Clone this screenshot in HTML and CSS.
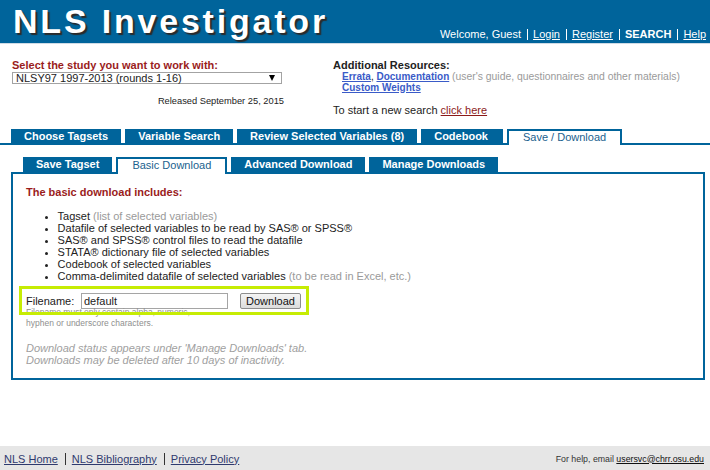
FILE: index.html
```html
<!DOCTYPE html>
<html lang="en">
<head>
  <meta charset="UTF-8" />
  <title>NLS Investigator</title>
  <link rel="stylesheet" href="styles.css">
</head>
<body>
  <header class="top">
    <div class="logo">NLS Investigator</div>
    <div class="user-nav">
      <span>Welcome, Guest</span><i class="sep"></i><a href="#">Login</a><i class="sep"></i><a href="#">Register</a><i class="sep"></i><b>SEARCH</b><i class="sep"></i><a href="#">Help</a>
    </div>
  </header>

  <section class="study">
    <div class="study-pick">
      <div class="pick-label">Select the study you want to work with:</div>
      <div class="select-box"><span>NLSY97 1997-2013 (rounds 1-16)</span><i class="arrow"></i></div>
      <div class="released">Released September 25, 2015</div>
    </div>
    <div class="resources">
      <div class="res-title">Additional Resources:</div>
      <div class="res-line"><a href="#">Errata</a>, <a href="#">Documentation</a> <span class="note">(user's guide, questionnaires and other materials)</span></div>
      <div class="res-line"><a href="#">Custom Weights</a></div>
      <div class="new-search">To start a new search <a href="#">click here</a></div>
    </div>
  </section>

  <nav class="tabs main-tabs">
    <a href="#" class="tab">Choose Tagsets</a>
    <a href="#" class="tab">Variable Search</a>
    <a href="#" class="tab">Review Selected Variables (8)</a>
    <a href="#" class="tab codebook">Codebook</a>
    <a href="#" class="tab active">Save / Download</a>
  </nav>

  <nav class="tabs sub-tabs">
    <a href="#" class="tab">Save Tagset</a>
    <a href="#" class="tab active">Basic Download</a>
    <a href="#" class="tab">Advanced Download</a>
    <a href="#" class="tab">Manage Downloads</a>
  </nav>

  <main class="panel">
    <h3>The basic download includes:</h3>
    <ul class="includes">
      <li>Tagset <span class="note">(list of selected variables)</span></li>
      <li>Datafile of selected variables to be read by SAS&reg; or SPSS&reg;</li>
      <li>SAS&reg; and SPSS&reg; control files to read the datafile</li>
      <li>STATA&reg; dictionary file of selected variables</li>
      <li>Codebook of selected variables</li>
      <li>Comma-delimited datafile of selected variables <span class="note">(to be read in Excel, etc.)</span></li>
    </ul>

    <div class="file-area">
      <div class="file-row">
        <label for="fname">Filename:</label>
        <div class="file-input" id="fname">default</div>
        <button class="btn">Download</button>
      </div>
      <div class="file-help">Filename must only contain alpha, numeric,<br>hyphen or underscore characters.</div>
      <div class="highlight"></div>
    </div>

    <p class="status">Download status appears under 'Manage Downloads' tab.<br>Downloads may be deleted after 10 days of inactivity.</p>
  </main>

  <footer class="foot">
    <div class="foot-links">
      <a href="#">NLS Home</a><i class="sep"></i><a href="#">NLS Bibliography</a><i class="sep"></i><a href="#">Privacy Policy</a>
    </div>
    <div class="foot-help">For help, email <a href="#">usersvc@chrr.osu.edu</a></div>
  </footer>
</body>
</html>
```

FILE: styles.css
```css
body {
  margin: 0;
  font-family: "Liberation Sans", Arial, sans-serif;
  font-size: 11px;
  color: #222;
  background-color: white;
}

a {
  color: inherit;
}

.note {
  color: #9a9a9a;
}

/* header */

.top {
  height: 43px;
  background-color: #00649b;
  border-bottom: 1px solid #cfdbe5;
  display: flex;
  justify-content: space-between;
  align-items: flex-start;
  color: white;
}

.logo {
  font-size: 34px;
  line-height: 34px;
  font-weight: bold;
  letter-spacing: 2.8px;
  padding: 3.5px 0 0 13px;
  text-shadow: 2px 2px 1px #2b2b2b;
}

.user-nav {
  padding: 27.5px 4px 0 0;
  line-height: 12px;
}

.user-nav a {
  color: white;
}

.user-nav .sep {
  display: inline-block;
  height: 11px;
  border-left: 1px solid white;
  margin: 0 5px 0 6px;
  vertical-align: -2px;
}

/* study picker + resources */

.study {
  display: flex;
  padding-top: 15.7px;
  line-height: 11px;
}

.study-pick {
  width: 272px;
  margin-left: 12px;
}

.pick-label {
  color: #9a1c1c;
  font-weight: bold;
}

.select-box {
  margin-top: 1.5px;
  height: 10px;
  line-height: 10px;
  border: 1px solid #a3a3a3;
  padding-left: 3px;
  width: 265px;
  display: flex;
  justify-content: space-between;
  align-items: center;
}

.arrow {
  width: 0;
  height: 0;
  border-left: 3.5px solid transparent;
  border-right: 3.5px solid transparent;
  border-top: 6px solid black;
  margin-right: 6px;
}

.released {
  margin-top: 12px;
  text-align: right;
  font-size: 9.3px;
}

.resources {
  margin-left: 49px;
}

.res-title {
  font-weight: bold;
}

.res-line {
  padding-left: 9px;
  font-size: 10px;
}

.res-line a {
  color: #3a5bc8;
  font-weight: bold;
}

.res-line .note {
  font-size: 10.4px;
}

.new-search {
  margin-top: 12px;
}

.new-search a {
  color: #8b1a1a;
}

/* tabs */

.tabs {
  display: flex;
  align-items: flex-end;
  gap: 4px;
}

.tab {
  display: block;
  background-color: #00649b;
  color: white;
  font-weight: bold;
  text-decoration: none;
  padding: 0 13px;
}

.tab.active {
  background-color: white;
  color: #1b5f8e;
  font-weight: normal;
  border: 2px solid #00649b;
  border-bottom: none;
  margin-bottom: -2px;
  padding: 0 14px;
  position: relative;
  z-index: 1;
}

.main-tabs {
  margin-top: 13.3px;
  padding-left: 11px;
  border-bottom: 2px solid #00649b;
}

.main-tabs .tab {
  height: 14px;
  line-height: 14px;
}

.main-tabs .tab.codebook {
  padding: 0 15px 0 13px;
}

.main-tabs .tab.active {
  line-height: 12px;
}

.sub-tabs {
  margin: 12.3px 0 0 23px;
}

.sub-tabs .tab {
  height: 15px;
  line-height: 15px;
}

.sub-tabs .tab.active {
  line-height: 13px;
}

/* panel */

.panel {
  margin: 0 5px 0 11px;
  border: 2px solid #00649b;
  padding: 13px 13px 11.8px;
}

.panel h3 {
  margin: 0;
  font-size: 11px;
  line-height: 11px;
  color: #9a1c1c;
}

.includes {
  margin: 12px 0 0;
  padding-left: 31.6px;
  line-height: 12px;
}

.file-area {
  position: relative;
  margin-top: 10.8px;
}

.file-row {
  display: flex;
  align-items: center;
  height: 16px;
}

.file-row label {
  width: 55px;
}

.file-input {
  width: 143px;
  height: 14px;
  line-height: 14px;
  border: 1px solid #a5a5a5;
  padding-left: 2px;
}

.btn {
  margin-left: 12px;
  width: 61px;
  height: 16px;
  padding: 0;
  font-family: inherit;
  font-size: 11px;
  color: #111;
  border: 1px solid #8d8d8d;
  border-radius: 2px;
  background: linear-gradient(#f4f4f4, #dcdcdc);
}

.file-help {
  margin-top: -2.5px;
  font-size: 8.5px;
  line-height: 11px;
  color: #8f8f8f;
}

.highlight {
  position: absolute;
  top: -7px;
  left: -7.4px;
  width: 284.7px;
  height: 23px;
  border: 3.5px solid #c6ec04;
}

.status {
  margin: 13.5px 0 0;
  font-style: italic;
  line-height: 12px;
  color: #a0a0a0;
}

/* footer */

.foot {
  margin-top: 66px;
  background-color: #e6e6e6;
  height: 24.3px;
  padding: 5.8px 6px 0 4px;
  box-sizing: border-box;
  display: flex;
  justify-content: space-between;
  line-height: 14px;
}

.foot-links a {
  color: #2f3a6e;
}

.foot-links .sep {
  display: inline-block;
  height: 12px;
  border-left: 1px solid #333;
  margin: 0 6px 0 7px;
  vertical-align: -2px;
}

.foot-help {
  font-size: 8.8px;
  color: #333;
}

.foot-help a {
  color: #111;
}
```
